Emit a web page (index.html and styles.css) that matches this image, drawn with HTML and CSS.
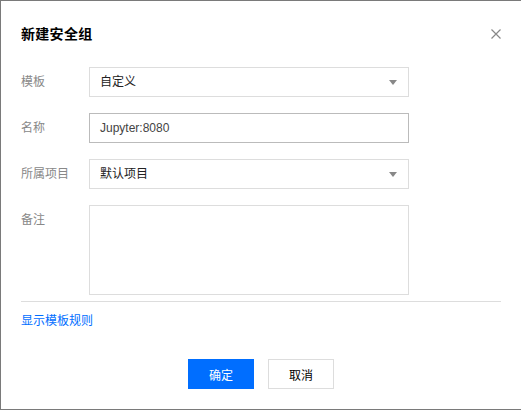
FILE: index.html
```html
<!DOCTYPE html>
<html lang="zh">
<head>
<meta charset="utf-8">
<title>新建安全组</title>
<link rel="stylesheet" href="styles.css">
</head>
<body>
<div class="dialog">
  <div class="header">
    <div class="title">新建安全组</div>
    <svg class="close" width="10" height="10" viewBox="0 0 10 10"><path d="M0.5 0.5 L9.5 9.5 M9.5 0.5 L0.5 9.5" stroke="#888" stroke-width="1.2" fill="none"/></svg>
  </div>
  <div class="form">
    <div class="row">
      <div class="label">模板</div>
      <div class="select"><span>自定义</span><i class="arrow"></i></div>
    </div>
    <div class="row">
      <div class="label">名称</div>
      <div class="input">Jupyter:8080</div>
    </div>
    <div class="row">
      <div class="label">所属项目</div>
      <div class="select"><span>默认项目</span><i class="arrow"></i></div>
    </div>
    <div class="row">
      <div class="label">备注</div>
      <div class="textarea"></div>
    </div>
  </div>
  <div class="divider"></div>
  <a class="link">显示模板规则</a>
  <div class="footer">
    <button class="btn primary">确定</button>
    <button class="btn">取消</button>
  </div>
</div>
</body>
</html>
```
FILE: styles.css
```css
* { box-sizing: border-box; }
html, body { margin: 0; padding: 0; background: #fff; }
body {
  font-family: "Liberation Sans", "Noto Sans CJK SC", sans-serif;
  font-size: 12px;
  color: #333;
}
.dialog {
  width: 521px;
  height: 410px;
  border-top: 1px solid #7a7a7a;
  border-left: 1px solid #7a7a7a;
  border-bottom: 1px solid #7a7a7a;
  padding: 0 20px;
  display: flex;
  flex-direction: column;
}
.header {
  margin-top: 23px;
  display: flex;
  justify-content: space-between;
  align-items: center;
  height: 20px;
}
.title {
  font-size: 14px;
  font-weight: bold;
  color: #000;
  line-height: 20px;
  letter-spacing: 0.3px;
}
.close { display: block; }
.form {
  margin-top: 23px;
  display: flex;
  flex-direction: column;
  gap: 16px;
}
.row { display: flex; }
.label {
  width: 68px;
  line-height: 30px;
  color: #888;
}
.select, .input, .textarea {
  width: 320px;
  height: 30px;
  border: 1px solid #ddd;
  padding: 0 10px;
  line-height: 28px;
  color: #222;
}
.select {
  display: flex;
  justify-content: space-between;
  align-items: center;
}
.arrow {
  width: 0;
  height: 0;
  border-left: 4px solid transparent;
  border-right: 4px solid transparent;
  border-top: 5px solid #888;
  margin-right: 1px;
}
.input { border-color: #bbb; color: #444; }
.textarea { height: 90px; }
.divider {
  margin-top: 6px;
  height: 1px;
  background: #ddd;
}
.link {
  margin-top: 9px;
  line-height: 20px;
  color: #006eff;
  align-self: flex-start;
}
.footer {
  margin-top: 28px;
  display: flex;
  justify-content: center;
  gap: 14px;
}
.btn {
  width: 66px;
  height: 30px;
  border: 1px solid #ddd;
  background: #fff;
  color: #000;
  font-family: inherit;
  font-size: 12px;
  padding: 0;
}
.btn.primary {
  background: #006eff;
  border-color: #006eff;
  color: #fff;
}
```
